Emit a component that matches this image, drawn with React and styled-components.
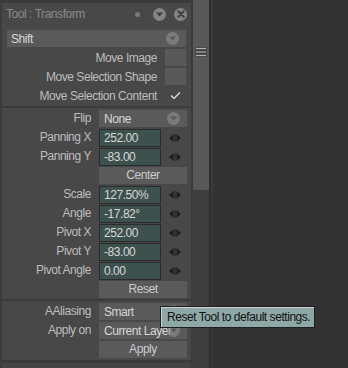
import React from 'react';
import styled, { createGlobalStyle } from 'styled-components';

const Global = createGlobalStyle`
  html, body { margin: 0; padding: 0; background: #333333; }
  body {
    font-family: "Liberation Sans", Arial, sans-serif;
    font-size: 12px;
    letter-spacing: -0.45px;
  }
  * { box-sizing: border-box; }
`;

const Screen = styled.div`
  position: relative;
  display: flex;
  width: 348px;
  height: 368px;
  overflow: hidden;
  background: #333333;
`;

const Panel = styled.div`
  width: 191px;
  flex: none;
  display: flex;
  flex-direction: column;
  background: #484848;
  border-left: 2px solid #3c3c3c;
`;

const TitleBar = styled.div`
  height: 25px;
  flex: none;
  display: flex;
  align-items: center;
  border-top: 3px solid #3a3a3a;
  padding: 0 4px 0 4px;
  color: #8a8a8a;
`;

const TitleText = styled.div`
  flex: 1;
`;

const Dot = styled.div`
  width: 5px;
  height: 5px;
  border-radius: 50%;
  background: #7a7a7a;
  margin-right: 13px;
`;

const RoundBtn = styled.div`
  width: 13px;
  height: 13px;
  border-radius: 50%;
  background: #848484;
  display: flex;
  align-items: center;
  justify-content: center;
  margin-left: ${p => p.$ml || 0}px;
  flex: none;
`;

const Section = styled.div`
  display: flex;
  flex-direction: column;
  gap: 2px;
  padding: ${p => p.$pad};
`;

const Separator = styled.div`
  height: 2px;
  background: #3b3b3b;
  flex: none;
`;

const Select = styled.div`
  position: relative;
  height: 17px;
  width: ${p => (p.$w ? `${p.$w}px` : 'auto')};
  margin-right: ${p => p.$mr || 0}px;
  background: #5a5a5a;
  color: #d8d8d8;
  display: flex;
  align-items: center;
  padding-left: ${p => p.$pl || 5}px;
  white-space: nowrap;
`;

const SelectArrow = styled.div`
  position: absolute;
  right: 7px;
  top: 2px;
  width: 13px;
  height: 13px;
  border-radius: 50%;
  background: rgba(145, 145, 145, 0.6);
  display: flex;
  align-items: center;
  justify-content: center;
`;

const CheckRow = styled.div`
  height: 17px;
  display: flex;
  align-items: center;
  justify-content: flex-end;
  padding-right: 5px;
  color: #bdbdbd;
`;

const CheckLabel = styled.span`
  margin-right: 8px;
`;

const CheckBox = styled.div`
  width: 21px;
  height: 17px;
  background: ${p => (p.$checked ? 'transparent' : '#595959')};
  display: flex;
  align-items: center;
  justify-content: center;
`;

const Grid = styled.div`
  display: grid;
  grid-template-columns: 89px 88px;
  column-gap: 8px;
  row-gap: 2px;
  grid-auto-rows: 17px;
`;

const Label = styled.div`
  grid-column: 1;
  text-align: right;
  color: #bdbdbd;
  line-height: 17px;
  white-space: nowrap;
`;

const Control = styled.div`
  grid-column: 2;
  display: flex;
  align-items: center;
`;

const Field = styled.div`
  width: 62px;
  height: 18px;
  background: #3d524e;
  border: 1px solid #2b2b2b;
  color: #d6d6d6;
  padding-left: 4px;
  line-height: 16px;
  flex: none;
`;

const Stepper = styled.svg`
  margin-left: 8px;
  flex: none;
`;

const Button = styled.div`
  grid-column: 2;
  height: 17px;
  background: #5a5a5a;
  color: #cbcbcb;
  text-align: center;
  line-height: 17px;
`;

const BottomEdge = styled.div`
  margin-top: auto;
  height: 8px;
  border-top: 3px solid #3a3a3a;
  background: #444444;
  flex: none;
`;

const Gutter = styled.div`
  width: ${p => p.$w}px;
  flex: none;
  background: ${p => p.$bg};
`;

const ScrollCol = styled.div`
  width: 16px;
  flex: none;
  background: #3e3e3e;
  display: flex;
  flex-direction: column;
`;

const Thumb = styled.div`
  height: 190px;
  background: #585858;
  display: flex;
  justify-content: center;
  padding-top: 47px;
`;

const Tooltip = styled.div`
  position: absolute;
  left: 160px;
  top: 306px;
  width: 155px;
  height: 22px;
  background: #8ea8a7;
  border: 1px solid #1e1e1e;
  box-shadow: inset 1px 1px 0 #c9d6d5;
  color: #111111;
  padding-left: 6px;
  line-height: 20px;
  white-space: nowrap;
`;

const Triangle = ({ color = '#5a5a5a' }) => (
  <svg width="7" height="5" viewBox="0 0 7 5">
    <polygon points="0,0.5 7,0.5 3.5,4.5" fill={color} />
  </svg>
);

const XMark = () => (
  <svg width="8" height="8" viewBox="0 0 8 8">
    <path d="M1.3 1.3 L6.7 6.7 M6.7 1.3 L1.3 6.7" stroke="#404040" strokeWidth="2" strokeLinecap="round" />
  </svg>
);

const StepIcon = () => (
  <Stepper width="12" height="8" viewBox="0 0 12 8">
    <polygon points="0,4 4.5,0 4.5,8" fill="#1d1d1d" />
    <rect x="5.5" y="0" width="1" height="8" fill="#1d1d1d" />
    <polygon points="12,4 7.5,0 7.5,8" fill="#1d1d1d" />
  </Stepper>
);

const Check = () => (
  <svg width="11" height="9" viewBox="0 0 11 9">
    <polyline points="1,4.5 4,7.5 10,1.5" fill="none" stroke="#e8e8e8" strokeWidth="1.2" />
  </svg>
);

const Grip = () => (
  <svg width="12" height="10" viewBox="0 0 12 10">
    <rect x="0.5" y="0.5" width="11" height="9" fill="#3a3a3a" />
    <rect x="1" y="1" width="10" height="1.2" fill="#b0b0b0" />
    <rect x="1" y="4.4" width="10" height="1.2" fill="#b0b0b0" />
    <rect x="1" y="7.8" width="10" height="1.2" fill="#b0b0b0" />
  </svg>
);

const numberRows = [
  ['Scale', '127.50%'],
  ['Angle', '-17.82°'],
  ['Pivot X', '252.00'],
  ['Pivot Y', '-83.00'],
  ['Pivot Angle', '0.00'],
];

export default function App() {
  return (
    <>
      <Global />
      <Screen>
        <Panel>
          <TitleBar>
            <TitleText>Tool : Transform</TitleText>
            <Dot />
            <RoundBtn><Triangle color="#3c3c3c" /></RoundBtn>
            <RoundBtn $ml={8}><XMark /></RoundBtn>
          </TitleBar>

          <Section $pad="5px 0 2px 5px">
            <Select $pl={4} $mr={5}>
              Shift
              <SelectArrow><Triangle /></SelectArrow>
            </Select>
            <CheckRow>
              <CheckLabel>Move Image</CheckLabel>
              <CheckBox />
            </CheckRow>
            <CheckRow>
              <CheckLabel>Move Selection Shape</CheckLabel>
              <CheckBox />
            </CheckRow>
            <CheckRow>
              <CheckLabel>Move Selection Content</CheckLabel>
              <CheckBox $checked><Check /></CheckBox>
            </CheckRow>
          </Section>

          <Separator />

          <Section $pad="2px 0 1px 0">
            <Grid>
              <Label>Flip</Label>
              <Control>
                <Select $w={88}>
                  None
                  <SelectArrow><Triangle /></SelectArrow>
                </Select>
              </Control>
              <Label>Panning X</Label>
              <Control><Field>252.00</Field><StepIcon /></Control>
              <Label>Panning Y</Label>
              <Control><Field>-83.00</Field><StepIcon /></Control>
              <Button>Center</Button>
              {numberRows.map(([l, v]) => (
                <React.Fragment key={l}>
                  <Label>{l}</Label>
                  <Control><Field>{v}</Field><StepIcon /></Control>
                </React.Fragment>
              ))}
              <Button>Reset</Button>
            </Grid>
          </Section>

          <Separator />

          <Section $pad="2px 0 1px 0">
            <Grid>
              <Label>AAliasing</Label>
              <Control>
                <Select $w={88}>
                  Smart
                  <SelectArrow><Triangle /></SelectArrow>
                </Select>
              </Control>
              <Label>Apply on</Label>
              <Control>
                <Select $w={88}>
                  Current Layer
                  <SelectArrow><Triangle /></SelectArrow>
                </Select>
              </Control>
              <Button>Apply</Button>
            </Grid>
          </Section>

          <BottomEdge />
        </Panel>

        <Gutter $w={2} $bg="#3b3b3b" />
        <ScrollCol>
          <Thumb><Grip /></Thumb>
        </ScrollCol>
        <Gutter $w={2} $bg="#2e2e2e" />
        <Gutter $w={2} $bg="#3a3a3a" />

        <Tooltip>Reset Tool to default settings.</Tooltip>
      </Screen>
    </>
  );
}
